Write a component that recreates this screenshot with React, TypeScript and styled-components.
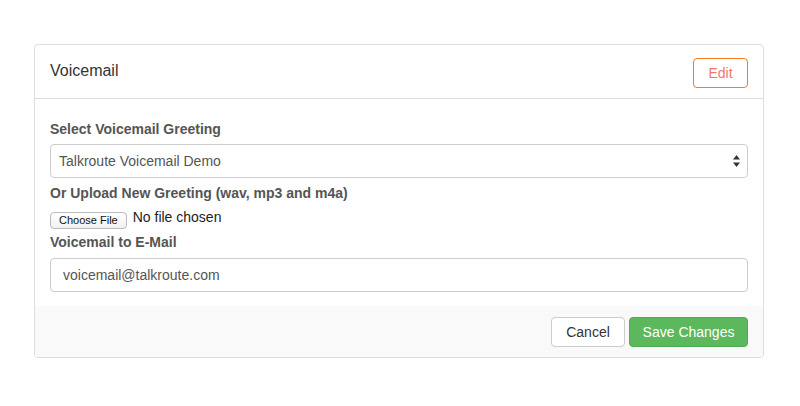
import React from 'react'
import styled, { createGlobalStyle } from 'styled-components'

const Global = createGlobalStyle`
  html, body {
    margin: 0;
    padding: 0;
    background: #fff;
    font-family: "Liberation Sans", Arial, sans-serif;
    font-size: 14px;
    color: #333;
  }
`

const Page = styled.div`
  padding: 44px 36px 0 34px;
`

const Panel = styled.div`
  border: 1px solid #ddd;
  border-radius: 4px;
  background: #fff;
  overflow: hidden;
`

const Header = styled.div`
  display: flex;
  align-items: center;
  justify-content: space-between;
  height: 53px;
  padding: 0 15px;
  border-bottom: 1px solid #ddd;
`

const Title = styled.h3`
  margin: 0;
  font-size: 16px;
  font-weight: normal;
  color: #333;
  position: relative;
  top: -1px;
`

const OutlineButton = styled.button`
  height: 30px;
  width: 55px;
  border: 1px solid #f57c1f;
  border-radius: 4px;
  background: #fff;
  color: #f2776f;
  font-family: inherit;
  font-size: 14px;
  padding: 0;
  position: relative;
  top: 1px;
`

const Body = styled.div`
  padding: 20px 15px 14px;
  display: flex;
  flex-direction: column;
`

const Label = styled.label<{ $gap?: number }>`
  font-weight: bold;
  color: #555;
  font-size: 14px;
  line-height: 20px;
  margin-bottom: ${(p) => p.$gap ?? 5}px;
`

const SelectBox = styled.div`
  position: relative;
  height: 32px;
  border: 1px solid #ccc;
  border-radius: 4px;
  display: flex;
  align-items: center;
  padding: 0 8px;
  color: #555;
  margin-bottom: 5px;
`

const Arrows = styled.svg`
  position: absolute;
  right: 7px;
  top: 10px;
`

const FileRow = styled.div`
  display: flex;
  align-items: center;
  gap: 6px;
  margin-bottom: 1px;
  height: 24px;
`

const FileButton = styled.span`
  display: inline-flex;
  align-items: center;
  height: 15px;
  padding: 0 8px;
  border: 1px solid #bbb;
  border-radius: 4px;
  background: linear-gradient(#fff, #f1f1f1);
  font-size: 11px;
  color: #111;
  position: relative;
  top: 1px;
`

const FileText = styled.span`
  font-size: 14px;
  color: #222;
  position: relative;
  top: -2px;
`

const TextInput = styled.div`
  height: 32px;
  border: 1px solid #ccc;
  border-radius: 4px;
  display: flex;
  align-items: center;
  padding: 0 12px;
  color: #555;
  font-size: 14px;
`

const Footer = styled.div`
  background: #f9f9f9;
  display: flex;
  justify-content: flex-end;
  gap: 4px;
  padding: 11px 15px 10px;
`

const Button = styled.button<{ $primary?: boolean; $w: number }>`
  height: 30px;
  width: ${(p) => p.$w}px;
  padding: 0;
  border-radius: 4px;
  font-family: inherit;
  font-size: 14px;
  border: 1px solid ${(p) => (p.$primary ? '#4cae4c' : '#ccc')};
  background: ${(p) => (p.$primary ? '#5cb85c' : '#fff')};
  color: ${(p) => (p.$primary ? '#fff' : '#333')};
`

export default function App() {
  return (
    <>
      <Global />
      <Page>
        <Panel>
          <Header>
            <Title>Voicemail</Title>
            <OutlineButton>Edit</OutlineButton>
          </Header>
          <Body>
            <Label $gap={5}>Select Voicemail Greeting</Label>
            <SelectBox>
              Talkroute Voicemail Demo
              <Arrows width="7" height="12" viewBox="0 0 7 12">
                <path d="M3.5 0 L7 4.5 L0 4.5 Z" fill="#333" />
                <path d="M3.5 12 L7 7.5 L0 7.5 Z" fill="#333" />
              </Arrows>
            </SelectBox>
            <Label $gap={4}>Or Upload New Greeting (wav, mp3 and m4a)</Label>
            <FileRow>
              <FileButton>Choose File</FileButton>
              <FileText>No file chosen</FileText>
            </FileRow>
            <Label $gap={6}>Voicemail to E-Mail</Label>
            <TextInput>voicemail@talkroute.com</TextInput>
          </Body>
          <Footer>
            <Button $w={74}>Cancel</Button>
            <Button $primary $w={119}>
              Save Changes
            </Button>
          </Footer>
        </Panel>
      </Page>
    </>
  )
}
